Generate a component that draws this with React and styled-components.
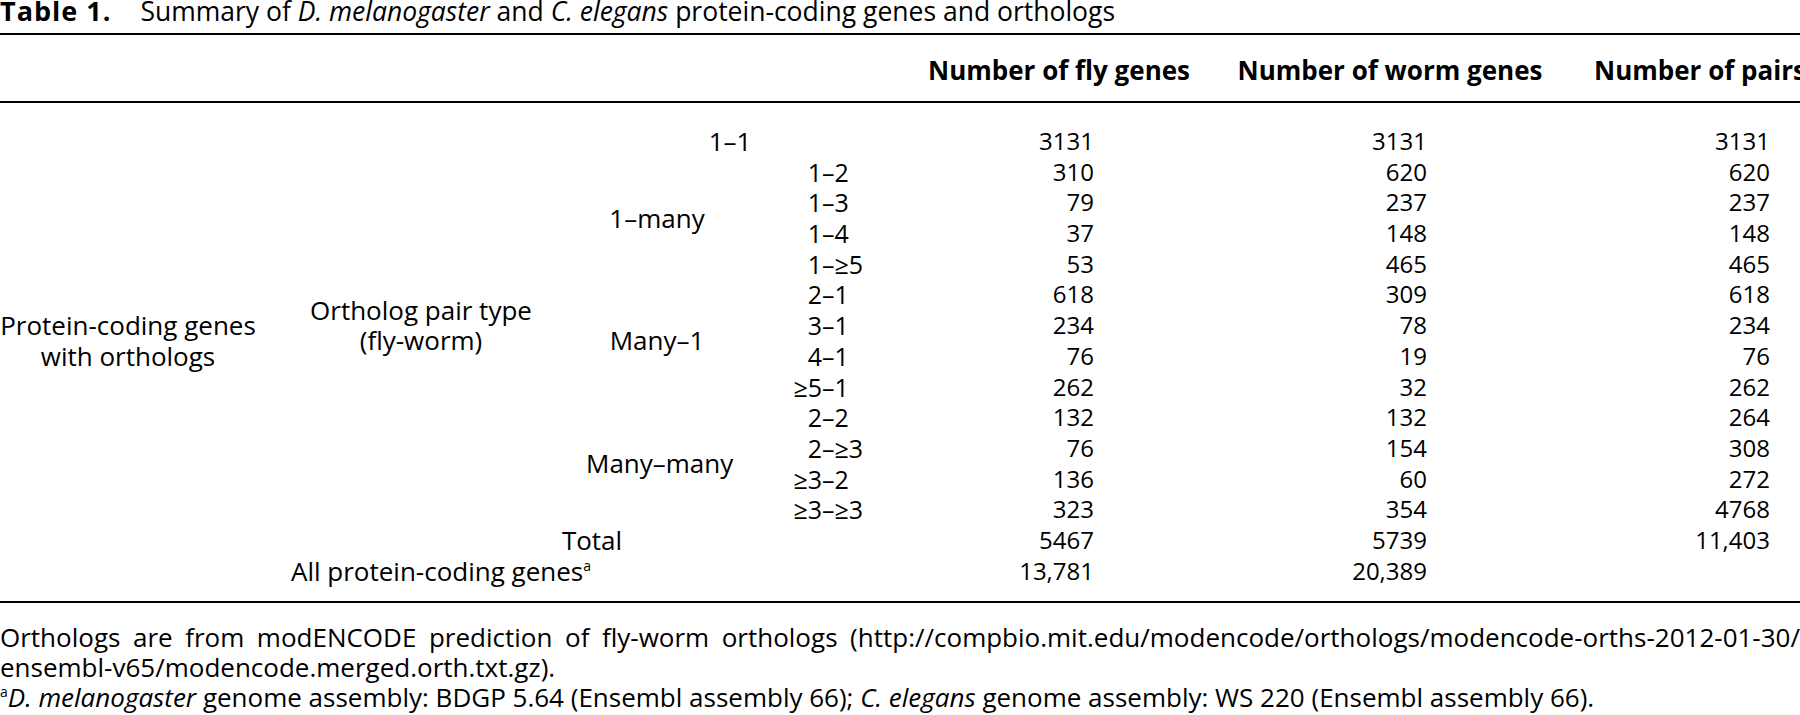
import React from "react";
import styled, { createGlobalStyle } from "styled-components";

const GlobalStyle = createGlobalStyle`
  html, body {
    margin: 0;
    padding: 0;
    background: #fff;
    overflow: hidden;
  }
  body {
    font-family: "Open Sans", "Liberation Sans", sans-serif;
    color: #000;
  }
`;

const COLS = "256px 330px 142px 200px 258px 408px 1fr";

const Page = styled.div`
  width: 1800px;
  height: 715px;
  overflow: hidden;
`;

const Title = styled.div`
  font-size: 26.5px;
  line-height: 22px;
  white-space: nowrap;
`;

const TitleLabel = styled.b`
  font-weight: 700;
  font-size: 27px;
  letter-spacing: 1px;
  margin-right: 29px;
`;

const Rule = styled.div`
  height: 2px;
  background: #000;
  margin-top: ${(p) => p.$top || 0}px;
`;

const HeaderRow = styled.div`
  display: grid;
  grid-template-columns: ${COLS};
  height: 66px;
  align-items: center;
  font-size: 26px;
  font-weight: 700;
`;

const HeadCell = styled.div`
  grid-column: ${(p) => p.$col};
  text-align: ${(p) => p.$align || "center"};
  white-space: nowrap;
  padding-top: 4px;
`;

const Body = styled.div`
  display: grid;
  grid-template-columns: ${COLS};
  grid-template-rows: repeat(15, 30.7px);
  padding: 23px 0 15px;
  font-size: 26px;
  line-height: 30.7px;
`;

const Label = styled.div`
  grid-column: ${(p) => p.$col};
  grid-row: ${(p) => p.$row};
  align-self: center;
  text-align: center;
  white-space: nowrap;
  padding-right: ${(p) => p.$shift || 0}px;
`;

const Pair = styled.div`
  grid-column: 4;
  grid-row: ${(p) => p.$row};
  display: grid;
  grid-template-columns: 94px auto 1fr;
  font-size: 25px;
  white-space: nowrap;
`;

const PairLeft = styled.span`
  text-align: right;
`;

const Num = styled.div`
  grid-column: ${(p) => p.$col};
  grid-row: ${(p) => p.$row};
  text-align: right;
  font-size: 24px;
  padding-right: ${(p) => p.$pad}px;
`;

const Sup = styled.sup`
  font-size: 14px;
  line-height: 0;
  vertical-align: 10px;
`;

const Notes = styled.div`
  margin-top: 19px;
  font-size: 26px;
  line-height: 30px;
`;

const JustLine = styled.div`
  text-align: justify;
  text-align-last: justify;
  white-space: nowrap;
`;

const NoteLine = styled.div`
  white-space: nowrap;
`;

const pairs = [
  ["1", "2"],
  ["1", "3"],
  ["1", "4"],
  ["1", "≥5"],
  ["2", "1"],
  ["3", "1"],
  ["4", "1"],
  ["≥5", "1"],
  ["2", "2"],
  ["2", "≥3"],
  ["≥3", "2"],
  ["≥3", "≥3"],
];

const counts = [
  ["3131", "3131", "3131"],
  ["310", "620", "620"],
  ["79", "237", "237"],
  ["37", "148", "148"],
  ["53", "465", "465"],
  ["618", "309", "618"],
  ["234", "78", "234"],
  ["76", "19", "76"],
  ["262", "32", "262"],
  ["132", "132", "264"],
  ["76", "154", "308"],
  ["136", "60", "272"],
  ["323", "354", "4768"],
  ["5467", "5739", "11,403"],
  ["13,781", "20,389", ""],
];

const numPads = [92, 167, 30];

export default function App() {
  return (
    <Page>
      <GlobalStyle />
      <Title>
        <TitleLabel>Table 1.</TitleLabel>
        Summary of <i>D. melanogaster</i> and <i>C. elegans</i> protein-coding
        genes and orthologs
      </Title>
      <Rule $top={11} />
      <HeaderRow>
        <HeadCell $col={5}>Number of fly genes</HeadCell>
        <HeadCell $col={6}>Number of worm genes</HeadCell>
        <HeadCell $col={7} $align="left">
          Number of pairs
        </HeadCell>
      </HeaderRow>
      <Rule />
      <Body>
        <Label $col="1" $row="1 / 15">
          Protein-coding genes
          <br />
          with orthologs
        </Label>
        <Label $col="2" $row="1 / 14">
          Ortholog pair type
          <br />
          (fly-worm)
        </Label>
        <Label $col="3 / 5" $row="1" $shift={54}>
          1–1
        </Label>
        <Label $col="3" $row="2 / 6">
          1–many
        </Label>
        <Label $col="3" $row="6 / 10">
          Many–1
        </Label>
        <Label $col="3" $row="10 / 14">
          Many–many
        </Label>
        {pairs.map(([a, b], i) => (
          <Pair key={i} $row={i + 2}>
            <PairLeft>{a}</PairLeft>
            <span>–</span>
            <span>{b}</span>
          </Pair>
        ))}
        <Label $col="2 / 5" $row="14">
          Total
        </Label>
        <Label $col="1 / 5" $row="15" $shift={46}>
          All protein-coding genes<Sup>a</Sup>
        </Label>
        {counts.map((row, r) =>
          row.map((v, c) => (
            <Num key={`${r}-${c}`} $col={c + 5} $row={r + 1} $pad={numPads[c]}>
              {v}
            </Num>
          ))
        )}
      </Body>
      <Rule />
      <Notes>
        <JustLine>
          Orthologs are from modENCODE prediction of fly-worm orthologs
          (http://compbio.mit.edu/modencode/orthologs/modencode-orths-2012-01-30/
        </JustLine>
        <NoteLine>ensembl-v65/modencode.merged.orth.txt.gz).</NoteLine>
        <NoteLine>
          <Sup>a</Sup>
          <i>D. melanogaster</i> genome assembly: BDGP 5.64 (Ensembl assembly
          66); <i>C. elegans</i> genome assembly: WS 220 (Ensembl assembly 66).
        </NoteLine>
      </Notes>
    </Page>
  );
}
